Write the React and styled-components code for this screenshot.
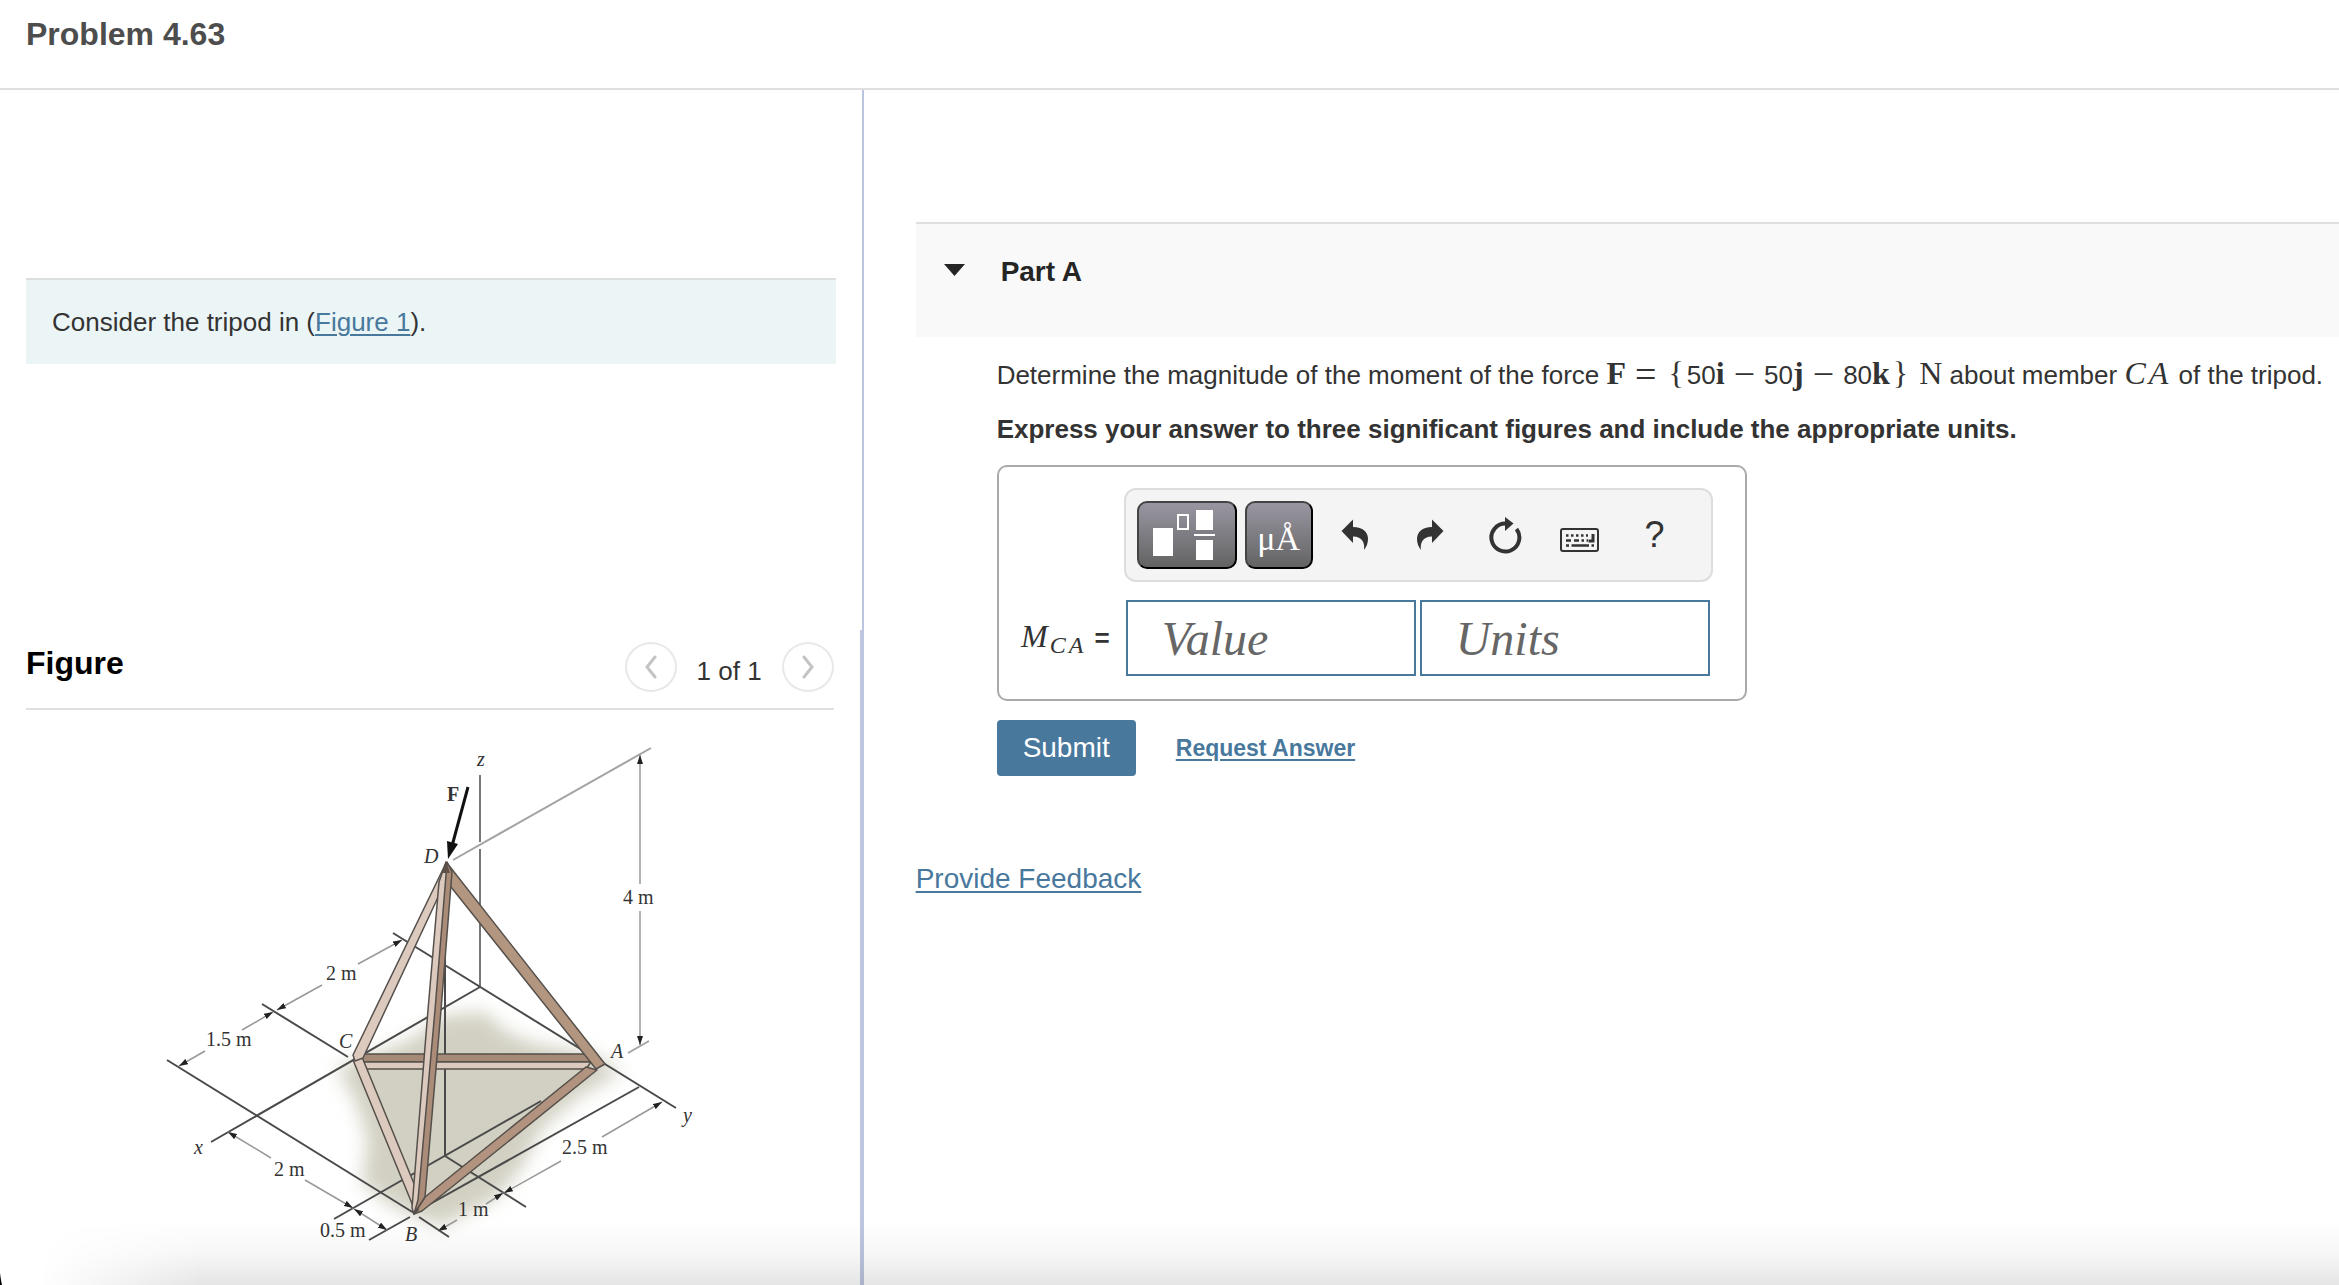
import React from 'react';
import styled, { createGlobalStyle } from 'styled-components';

const GlobalStyle = createGlobalStyle`
    * {
        box-sizing: border-box;
    }

    body {
        margin: 0;
        background: #fff;
        color: #333;
        font-family: "Liberation Sans", Arial, sans-serif;
        font-size: 26px;
        line-height: 32px;
    }

    button, input {
        font-family: inherit;
        margin: 0;
    }
`;

const Page = styled.div`
    display: flex;
    flex-direction: column;
    min-height: 100vh;
`;

const Header = styled.header`
    padding: 16px 26px 36px;
    border-bottom: 2px solid #dfdfdf;
`;

const ProblemTitle = styled.h1`
    margin: 0;
    font-size: 32px;
    line-height: 36px;
    color: #4d4d4d;
`;

const Columns = styled.div`
    flex: 1;
    display: grid;
    grid-template-columns: minmax(0, 24fr) minmax(0, 41fr);
`;

const LeftColumn = styled.div`
    display: flex;
    flex-direction: column;
`;

const IntroPane = styled.section`
    min-height: 540px;
    padding: 188px 26px 0;
    border-right: 2px solid #bac6e0;
`;

const IntroBox = styled.div`
    padding: 26px;
    border-top: 2px solid #dcdfdf;
    background: #ebf5f6;
`;

const Link = styled.a`
    color: #49789d;
    font-size: ${props => props.$size || 26}px;
    font-weight: ${props => (props.$bold ? 'bold' : 'normal')};
    text-decoration: underline;
    text-decoration-thickness: 2px;
    text-underline-offset: 3px;
`;

const FigurePane = styled.section`
    flex: 1;
    padding: 12px 26px 0;
    border-right: 4px solid #bcc6df;
`;

const FigureHeader = styled.div`
    display: flex;
    justify-content: space-between;
    padding-bottom: 16px;
    border-bottom: 2px solid #dfdfdf;
`;

const FigureTitle = styled.h2`
    margin: 0;
    padding-top: 3px;
    font-size: 32px;
    line-height: 36px;
    color: #000;
`;

const Pager = styled.div`
    display: flex;
    align-items: center;
    gap: 20px;
`;

const PagerLabel = styled.span`
    padding-top: 8px;
`;

const PagerButton = styled.button`
    display: flex;
    align-items: center;
    justify-content: center;
    width: 52px;
    height: 50px;
    padding: 0;
    border: 2px solid #e8e8e8;
    border-radius: 50%;
    background: #fff;
`;

const FigureDrawing = styled.svg`
    display: block;
    max-width: 100%;
    margin: 20px auto 0;
    font-family: "Liberation Serif", "Times New Roman", serif;
    font-size: 20px;
    fill: #333;
`;

const RightColumn = styled.main`
    padding: 132px 0 0 52px;
`;

const PartHeader = styled.div`
    display: flex;
    align-items: flex-start;
    gap: 36px;
    min-height: 115px;
    padding: 32px 28px;
    border-top: 2px solid #dfdfdf;
    background: #f9f9f9;
`;

const ToggleButton = styled.button`
    display: flex;
    width: 21px;
    height: 32px;
    padding: 8px 0 0;
    border: 0;
    background: none;
`;

const PartTitle = styled.h2`
    margin: 0;
    font-size: 28px;
    line-height: 32px;
    color: #252525;
`;

const PartBody = styled.div`
    padding: 17px 0 0 81px;
`;

const Question = styled.p`
    margin: 0;
    line-height: 38px;
    white-space: nowrap;
`;

const Instruction = styled.p`
    margin: 16px 0 17px;
    line-height: 38px;
    font-weight: bold;
`;

const MathText = styled.span`
    font-family: "Liberation Serif", "Times New Roman", serif;
    font-size: 32px;
    font-weight: ${props => (props.$bold ? 'bold' : 'normal')};
    font-style: ${props => (props.$italic ? 'italic' : 'normal')};
`;

const Operator = styled(MathText)`
    margin: 0 9px;
    font-size: 38px;
    line-height: 24px;
    vertical-align: -3px;
`;

const Brace = styled(MathText)`
    margin: 0 3px;
`;

const Variable = styled.span`
    margin-right: 3px;
`;

const AnswerBox = styled.div`
    display: flex;
    flex-direction: column;
    align-items: flex-end;
    gap: 18px;
    width: 750px;
    padding: 21px 32px 23px 20px;
    border: 2px solid #aaa;
    border-radius: 10px;
`;

const Toolbar = styled.div`
    display: flex;
    align-items: center;
    gap: 8px;
    width: 589px;
    height: 94px;
    padding: 0 11px;
    border: 2px solid #ddd;
    border-radius: 12px;
    background: #f4f4f4;
`;

const DarkButton = styled.button`
    display: flex;
    align-items: center;
    justify-content: center;
    width: ${props => props.$width}px;
    height: 68px;
    padding: ${props => props.$top || 0}px 0 0;
    border: 2px solid;
    border-color: #444 #000 #000 #444;
    border-radius: 10px;
    background: linear-gradient(#9996a2, #636363);
    color: #fff;
    font-family: "Liberation Serif", "Times New Roman", serif;
    font-size: 34px;
    line-height: 36px;
`;

const ToolIcons = styled.div`
    display: flex;
    gap: 7px;
`;

const IconButton = styled.button`
    display: flex;
    align-items: center;
    justify-content: center;
    width: 68px;
    height: 68px;
    padding: 0;
    border: 0;
    background: none;
    color: #333;
    font-size: 36px;
`;

const AnswerRow = styled.div`
    display: flex;
    align-items: center;
    gap: 4px;
    padding-right: 3px;
`;

const AnswerLabel = styled.label`
    display: flex;
    align-items: center;
    gap: 8px;
    padding-right: 12px;
    font-weight: bold;
`;

const Subscript = styled.sub`
    margin-left: 2px;
    font-size: 24px;
    line-height: 24px;
    vertical-align: -6px;
`;

const AnswerInput = styled.input`
    width: 290px;
    height: 76px;
    padding: 0 34px;
    border: 2px solid #49789d;
    border-radius: 0;
    background: #fff;
    font-family: "Liberation Serif", "Times New Roman", serif;
    font-size: 48px;
    font-style: italic;

    &::placeholder {
        color: #666;
        opacity: 1;
    }
`;

const Actions = styled.div`
    display: flex;
    align-items: center;
    gap: 40px;
    padding-top: 19px;
`;

const SubmitButton = styled.button`
    height: 56px;
    padding: 0 26px;
    border: 0;
    border-radius: 4px;
    background: #49789d;
    color: #fff;
    font-size: 28px;
`;

const Feedback = styled.footer`
    padding-top: 87px;
`;

// soft shade along the lower edge of the window
const BottomShade = styled.div`
    position: fixed;
    left: 0;
    right: 0;
    bottom: 0;
    height: 64px;
    pointer-events: none;
    background: linear-gradient(transparent, rgba(0, 0, 0, 0.03) 50%, rgba(0, 0, 0, 0.1));
    mask-image: linear-gradient(to right, transparent 40px, #000 200px);
`;

const WindowCorner = styled.svg`
    position: fixed;
    left: 0;
    bottom: 0;
`;

const axisLines = [
    [243, 203, 526, 378],
    [330, 257, 61, 412],
    [112, 274, 198, 327],
    [17, 330, 264, 483],
    [269, 487, 299, 507],
    [219, 510, 260, 487],
    [264, 483, 489, 357],
    [184, 489, 391, 371],
    [295, 426, 376, 477],
    [295, 190, 295, 426],
];

// x1, y1, x2, y2, the arrow head sits on the second point
const arrows = [
    [490, 154, 490, 25],
    [490, 181, 490, 315],
    [55, 321, 29, 336],
    [92, 300, 123, 282],
    [172, 255, 127, 280],
    [208, 234, 252, 210],
    [121, 428, 78, 402],
    [155, 450, 203, 478],
    [220, 489, 204, 479],
    [220, 489, 237, 500],
    [307, 490, 288, 501],
    [336, 474, 353, 463],
    [411, 431, 354, 463],
    [452, 407, 512, 372],
];

const labels = [
    ['4 m', 473, 174],
    ['2 m', 176, 250],
    ['1.5 m', 56, 316],
    ['2 m', 124, 446],
    ['0.5 m', 170, 507],
    ['1 m', 308, 486],
    ['2.5 m', 412, 424],
];

const pointLabels = [
    ['z', 327, 36],
    ['D', 274, 133],
    ['C', 189, 318],
    ['A', 461, 328],
    ['B', 255, 511],
    ['x', 44, 424],
    ['y', 533, 392],
];

function Tripod () {
    return (
        <FigureDrawing width="560" height="520" viewBox="0 0 560 520" role="img" aria-label="Tripod">
            <defs>
                <filter id="soft" x="-20%" y="-20%" width="140%" height="140%">
                    <feGaussianBlur stdDeviation="9" />
                </filter>
                <marker id="head" viewBox="0 0 9 6" refX="9" refY="3" markerWidth="9" markerHeight="6" markerUnits="userSpaceOnUse" orient="auto">
                    <path d="M0 0L9 3L0 6z" fill="#222" />
                </marker>
            </defs>

            <path
                filter="url(#soft)"
                fill="#d2d0c2"
                d="M187 338L222 325L265 308L290 286L335 282L356 302L385 314L440 324L472 342L430 366L392 398L370 440L344 470L290 496L245 478L212 452L218 410L206 372z"
            />
            <path d="M208 332L445 334L268 478z" fill="#d2d0c2" />

            <g stroke="#4a4a4a" strokeWidth="2">
                <path d="M330 45V112M330 119V257" stroke="#777" />
                {axisLines.map(([x1, y1, x2, y2], i) => (
                    <line key={i} x1={x1} y1={y1} x2={x2} y2={y2} />
                ))}
            </g>
            <g stroke="#a3a3a3" strokeWidth="2">
                <line x1="303" y1="130" x2="501" y2="18" />
                <line x1="478" y1="323" x2="499" y2="311" />
            </g>
            <g stroke="#999" strokeWidth="1.5">
                {arrows.map(([x1, y1, x2, y2], i) => (
                    <line key={i} x1={x1} y1={y1} x2={x2} y2={y2} markerEnd="url(#head)" />
                ))}
            </g>

            <g stroke="#55504b" strokeWidth="1.5" strokeLinejoin="round">
                <path d="M210 324H436L441 332H212z" fill="#a58a77" />
                <path d="M212 332H441L436 339H214z" fill="#dccabf" />
                <path d="M436 337L447 340L272 481L264 484L275 467z" fill="#b2937f" />
                <path d="M203 330L212 327L265 456L263 476z" fill="#dccabf" />
                <path d="M296 133L203 325L205 331L213 328L290 163z" fill="#dccabf" />
                <path d="M297 133L455 334L446 339L301 157z" fill="#b39680" />
                <path d="M296 132L289 152L278 280L262 478L264 484L268 480L288 280L297 140z" fill="#dccabf" />
                <path d="M297 132L302 142L291 280L275 467L264 484L268 470L285 280L296 145z" fill="#ab8c78" />
                <path d="M296 131L292 143H300z" fill="#5f5048" stroke="none" />
            </g>

            <line x1="318" y1="57" x2="302" y2="116" stroke="#111" strokeWidth="3" />
            <path d="M298 129L297 111L308 114z" fill="#111" />

            <text x="297" y="71" fontWeight="bold">F</text>
            {labels.map(([text, x, y]) => (
                <text key={x} x={x} y={y}>{text}</text>
            ))}
            {pointLabels.map(([text, x, y]) => (
                <text key={text} x={x} y={y} fontStyle="italic">{text}</text>
            ))}
        </FigureDrawing>
    )
}

function Chevron ({ d }) {
    return (
        <svg width="14" height="24" viewBox="0 0 14 24" fill="none" stroke="#c4c4c4" strokeWidth="3" strokeLinecap="round">
            <path d={d} />
        </svg>
    )
}

function TemplatesIcon () {
    return (
        <svg width="68" height="52" viewBox="0 0 68 52" fill="#fff">
            <rect x="0" y="19" width="20" height="28" />
            <rect x="25" y="6" width="10" height="14" fill="none" stroke="#fff" strokeWidth="2" />
            <rect x="43" y="1" width="17" height="20" />
            <rect x="41" y="25" width="21" height="2" />
            <rect x="43" y="31" width="17" height="20" />
        </svg>
    )
}

function ArrowIcon ({ flip }) {
    return (
        <svg width="28" height="32" viewBox="0 0 28 32" fill="currentColor">
            <path
                transform={flip ? 'matrix(-1 0 0 1 28 0)' : undefined}
                d="M0.5 12L12 0.5V8C22 8 27 13 27 20C27 24 25.5 28 23 31C24 24 21.5 17.5 12 17.5V24z"
            />
        </svg>
    )
}

function ResetIcon () {
    return (
        <svg width="34" height="38" viewBox="0 0 34 38">
            <path d="M17.5 7.5A14 14 0 1 0 28.5 13" fill="none" stroke="currentColor" strokeWidth="4" />
            <path d="M17 1L25.5 7.5L17 15z" fill="currentColor" />
        </svg>
    )
}

function KeyboardIcon () {
    return (
        <svg width="40" height="36" viewBox="0 -10 40 36" fill="none" stroke="currentColor" strokeWidth="2">
            <rect x="1" y="2" width="37" height="22" rx="2" />
            <path d="M6 8.5H28" strokeWidth="2.5" strokeDasharray="2.5 2.5" />
            <path d="M6 13.5H11M14 13.5H28" strokeWidth="2.5" strokeDasharray="5 2.5 2.5 2.5" />
            <path d="M33 7V14H28.5" strokeWidth="3" />
            <path d="M6 18.5H9M11.5 18.5H29M31.5 18.5H34" strokeWidth="2.5" />
        </svg>
    )
}

function App () {
    return (
        <Page>
            <GlobalStyle />
            <Header>
                <ProblemTitle>Problem 4.63</ProblemTitle>
            </Header>

            <Columns>
                <LeftColumn>
                    <IntroPane>
                        <IntroBox>
                            Consider the tripod in (<Link href="#figure">Figure 1</Link>).
                        </IntroBox>
                    </IntroPane>
                    <FigurePane id="figure">
                        <FigureHeader>
                            <FigureTitle>Figure</FigureTitle>
                            <Pager>
                                <PagerButton type="button" aria-label="Previous figure">
                                    <Chevron d="M11 2L3 12L11 22" />
                                </PagerButton>
                                <PagerLabel>1 of 1</PagerLabel>
                                <PagerButton type="button" aria-label="Next figure">
                                    <Chevron d="M3 2L11 12L3 22" />
                                </PagerButton>
                            </Pager>
                        </FigureHeader>
                        <Tripod />
                    </FigurePane>
                </LeftColumn>

                <RightColumn>
                    <PartHeader>
                        <ToggleButton type="button" aria-label="Toggle part">
                            <svg width="21" height="12" viewBox="0 0 21 12" fill="#252525">
                                <path d="M0 0H21L10.5 12z" />
                            </svg>
                        </ToggleButton>
                        <PartTitle>Part A</PartTitle>
                    </PartHeader>

                    <PartBody>
                        <Question>
                            Determine the magnitude of the moment of the force <MathText $bold>F</MathText>
                            <Operator>=</Operator>
                            <Brace>{'{'}</Brace>50<MathText $bold>i</MathText>
                            <Operator>−</Operator>50<MathText $bold>j</MathText>
                            <Operator>−</Operator>80<MathText $bold>k</MathText>
                            <Brace>{'}'}</Brace><MathText> N</MathText>
                            {' '}about member <MathText $italic><Variable>C</Variable><Variable>A</Variable></MathText> of the tripod.
                        </Question>
                        <Instruction>
                            Express your answer to three significant figures and include the appropriate units.
                        </Instruction>

                        <AnswerBox>
                            <Toolbar>
                                <DarkButton type="button" $width={100} aria-label="Templates">
                                    <TemplatesIcon />
                                </DarkButton>
                                <DarkButton type="button" $width={68} $top={8}>μÅ</DarkButton>
                                <ToolIcons>
                                    <IconButton type="button" aria-label="Undo"><ArrowIcon /></IconButton>
                                    <IconButton type="button" aria-label="Redo"><ArrowIcon flip /></IconButton>
                                    <IconButton type="button" aria-label="Reset"><ResetIcon /></IconButton>
                                    <IconButton type="button" aria-label="Keyboard"><KeyboardIcon /></IconButton>
                                    <IconButton type="button">?</IconButton>
                                </ToolIcons>
                            </Toolbar>
                            <AnswerRow>
                                <AnswerLabel htmlFor="value">
                                    <MathText $italic>
                                        M<Subscript><Variable>C</Variable><Variable>A</Variable></Subscript>
                                    </MathText>
                                    =
                                </AnswerLabel>
                                <AnswerInput id="value" placeholder="Value" />
                                <AnswerInput placeholder="Units" aria-label="Units" />
                            </AnswerRow>
                        </AnswerBox>

                        <Actions>
                            <SubmitButton type="submit">Submit</SubmitButton>
                            <Link href="#answer" $size={23} $bold>Request Answer</Link>
                        </Actions>
                    </PartBody>

                    <Feedback>
                        <Link href="#feedback" $size={28}>Provide Feedback</Link>
                    </Feedback>
                </RightColumn>
            </Columns>

            <BottomShade />
            <WindowCorner width="2" height="12" viewBox="0 0 2 12">
                <path d="M0 0Q1 8 2 12H0z" fill="#000" />
            </WindowCorner>
        </Page>
    )
}

export default App
